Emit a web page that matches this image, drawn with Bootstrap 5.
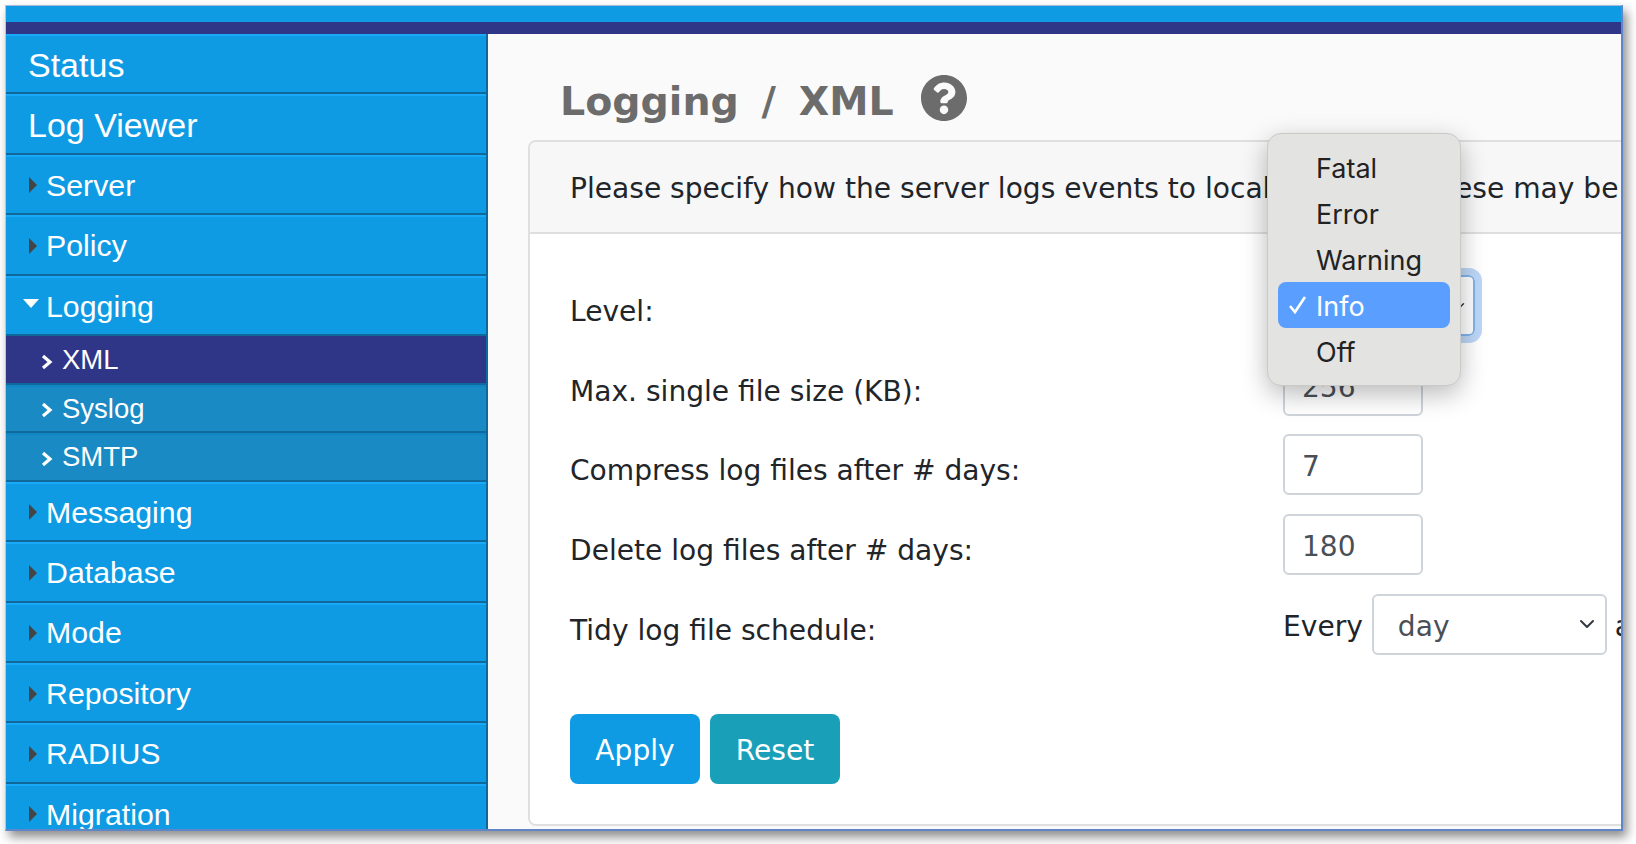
<!DOCTYPE html>
<html lang="en">
<head>
  <meta charset="UTF-8">
  <meta name="viewport" content="width=device-width, initial-scale=1.0">
  <title>Logging / XML</title>
  <link rel="stylesheet" href="https://cdn.jsdelivr.net/npm/bootstrap@5.3.2/dist/css/bootstrap.min.css">
  <style>
    html, body { height: 100%; overflow: hidden; background: #fff; }
    body { font-family: "DejaVu Sans", Verdana, sans-serif; color: #212529; }
    .shot-wrap { width: 1618px; height: 826px; margin: 5px 0 0 5px; box-shadow: 4px 6px 10px rgba(0,0,0,.45); }
    .shot-frame { position: relative; width: 1618px; height: 826px; overflow: hidden; background: #fafafa; border-top: 1px solid #a9b9dc; border-left: 1px solid #b9c6e2; border-right: 2px solid #5f86c8; border-bottom: 2px solid #5f86c8; }
    .bar-top { height: 16px; background: #0f9be3; }
    .bar-dark { height: 12px; background: #303687; }
    .side-nav { width: 482px; flex: none; height: 796px; overflow: hidden; background: #0f9be3; border-right: 2px solid #10689b; font-family: "Liberation Sans", Arial, sans-serif; }
    .side-item { display: flex; align-items: center; height: 60.4px; padding: 1px 0 0 17px; font-size: 30.3px; color: #fff; background: #0f9be3; border-top: 2px solid #18a9f8; border-bottom: 2px solid #10689b; }
    .side-item .tri { width: 18px; margin-right: 5px; flex: none; }
    .side-item.plain { padding: 2px 0 0 22px; font-size: 34px; }
    .side-sub { display: flex; align-items: center; height: 48.6px; padding: 0 0 1px 35px; font-size: 27.5px; color: #fff; background: #1a8ac4; border-top: 2px solid #0f86c4; border-bottom: 2px solid #10689b; }
    .side-sub.on { background: #303687; border-top-color: #303687; border-bottom-color: #10689b; }
    .side-sub svg { flex: none; margin: 4px 9px 0 0; }
    .main-pane { flex: 1; min-width: 0; padding: 0 0 0 40px; overflow: hidden; }
    .page-title { display: flex; align-items: center; gap: 27px; height: 106px; padding: 30px 0 0 32px; margin: 0; font-size: 39.5px; font-weight: 700; word-spacing: 9px; color: #6c6c6c; }
    .page-title svg { margin-top: -8px; }
    .log-card { width: 1400px; height: 686px; border: 2px solid #dfdfdf; border-radius: 8px; overflow: hidden; }
    .log-card .card-header { height: 92px; display: flex; align-items: center; padding: 4px 0 0 40px; background: #f7f7f7; border-bottom: 2px solid #dfdfdf; font-size: 28.1px; white-space: nowrap; }
    .log-card .card-body { padding: 41px 0 0 40px; background: #fff; font-size: 28.1px; }
    .form-line { display: flex; align-items: center; height: 61px; margin-bottom: 18.7px; }
    .form-line label { width: 713px; flex: none; margin: 0; padding-top: 13px; }
    .form-line .form-control, .form-line .form-select { height: 61px; font-size: 28.1px; color: #495057; border: 2px solid #ced4da; border-radius: 6px; box-shadow: none; }
    .form-line .form-control { width: 140px; padding: 4px 0 0 17px; }
    .form-line .level-select { width: 192px; padding: 0 0 0 17px; border-color: #7fb4ee; outline: 7px solid #bdd7f8; background-position: right 6px center; }
    .form-line .every-select { width: 235px; padding: 5px 0 0 24px; margin: 0 8px 0 9px; background-position: right 7px center; background-size: 22px 16px; flex: none; }
    .every-text { white-space: nowrap; padding-top: 6px; }
    .btn-row { display: flex; gap: 10px; margin-top: 59px; }
    .btn-row .btn { width: 130px; height: 70px; padding: 4px 0 0; font-size: 28.1px; color: #fff; border: 0; border-radius: 8px; }
    .btn-apply { background: #0f9be3; }
    .btn-reset { background: #1a9fb8; }
    .level-menu { position: absolute; left: 1261px; top: 127px; width: 194px; height: 253px; padding: 10px 10px; background: #e3e3e1; border: 1px solid #c9c9c7; border-radius: 14px; box-shadow: 0 8px 26px rgba(0,0,0,.28); font-family: Inter, "Liberation Sans", sans-serif; font-size: 27px; }
    .level-opt { position: relative; height: 46px; line-height: 49px; padding-left: 38px; border-radius: 8px; color: #222; }
    .level-opt.on { background: #5a9fff; color: #fff; }
    .level-opt svg { position: absolute; left: 10px; top: 13px; }
  </style>
</head>
<body>
  <div class="shot-wrap">
    <div class="shot-frame">
      <div class="bar-top"></div>
      <div class="bar-dark"></div>
      <div class="d-flex">
        <!-- Menu -->
        <nav class="side-nav" id="menu"></nav>

        <!-- Conteudo -->
        <div class="main-pane">
          <h2 class="page-title">Logging / XML
            <svg width="46" height="46" viewBox="8 8 496 496" fill="#6c6c6c"><path d="M504 256c0 136.997-111.043 248-248 248S8 392.997 8 256C8 119.083 119.043 8 256 8s248 111.083 248 248zM262.655 90c-54.497 0-89.255 22.957-116.549 63.758-3.536 5.286-2.353 12.415 2.715 16.258l34.699 26.31c5.205 3.947 12.621 3.008 16.665-2.122 17.864-22.658 30.113-35.797 57.303-35.797 20.429 0 45.698 13.148 45.698 32.958 0 14.976-12.363 22.667-32.534 33.976C247.128 238.528 216 254.941 216 296v4c0 6.627 5.373 12 12 12h56c6.627 0 12-5.373 12-12v-1.333c0-28.462 83.186-29.647 83.186-106.667 0-58.002-60.165-102-116.531-102zM256 338c-25.365 0-46 20.635-46 46 0 25.364 20.635 46 46 46s46-20.636 46-46c0-25.365-20.635-46-46-46z"/></svg>
          </h2>
          <div class="card log-card">
            <div class="card-header">Please specify how the server logs events to local disk files. These may be</div>
            <div class="card-body">
              <div class="form-line">
                <label>Level:</label>
                <select class="form-select level-select"><option>Info</option></select>
              </div>
              <div class="form-line">
                <label>Max. single file size (KB):</label>
                <input class="form-control" value="256">
              </div>
              <div class="form-line">
                <label>Compress log files after # days:</label>
                <input class="form-control" value="7">
              </div>
              <div class="form-line">
                <label>Delete log files after # days:</label>
                <input class="form-control" value="180">
              </div>
              <div class="form-line">
                <label>Tidy log file schedule:</label>
                <span class="every-text">Every</span>
                <select class="form-select every-select"><option>day</option></select>
                <span class="every-text">at</span>
              </div>
              <div class="btn-row">
                <button class="btn btn-apply">Apply</button>
                <button class="btn btn-reset">Reset</button>
              </div>
            </div>
          </div>
        </div>
      </div>

      <!-- Lista aberta do select -->
      <div class="level-menu">
        <div class="level-opt">Fatal</div>
        <div class="level-opt">Error</div>
        <div class="level-opt">Warning</div>
        <div class="level-opt on">
          <svg width="20" height="20" viewBox="0 0 20 20" fill="none" stroke="#fff" stroke-width="2.6"><path d="M2 11l5 6L17 2"/></svg>
          Info
        </div>
        <div class="level-opt">Off</div>
      </div>
    </div>
  </div>

  <script src="https://cdn.jsdelivr.net/npm/bootstrap@5.3.2/dist/js/bootstrap.bundle.min.js"></script>
  <script>
    const triRight = '<svg class="tri" width="18" height="18" viewBox="0 0 18 18"><path d="M6 1l8 8-8 8z" fill="#444"/></svg>';
    const triDown = '<svg class="tri" width="18" height="18" viewBox="0 0 18 18"><path d="M0 2h16l-8 9z" fill="#fff"/></svg>';
    const chevron = '<svg width="12" height="16" viewBox="0 0 12 16" fill="none" stroke="#fff" stroke-width="3.2"><path d="M2 2l7 6-7 6"/></svg>';

    const itens = [
      { t: 'Status', plain: true },
      { t: 'Log Viewer', plain: true },
      { t: 'Server' },
      { t: 'Policy' },
      { t: 'Logging', open: true },
      { t: 'XML', sub: true, on: true },
      { t: 'Syslog', sub: true },
      { t: 'SMTP', sub: true },
      { t: 'Messaging' },
      { t: 'Database' },
      { t: 'Mode' },
      { t: 'Repository' },
      { t: 'RADIUS' },
      { t: 'Migration' }
    ];

    document.getElementById('menu').innerHTML = itens.map(i => {
      if (i.sub) return `<div class="side-sub${i.on ? ' on' : ''}">${chevron}${i.t}</div>`;
      const seta = i.plain ? '' : (i.open ? triDown : triRight);
      return `<div class="side-item${i.plain ? ' plain' : ''}">${seta}${i.t}</div>`;
    }).join('');
  </script>
</body>
</html>
